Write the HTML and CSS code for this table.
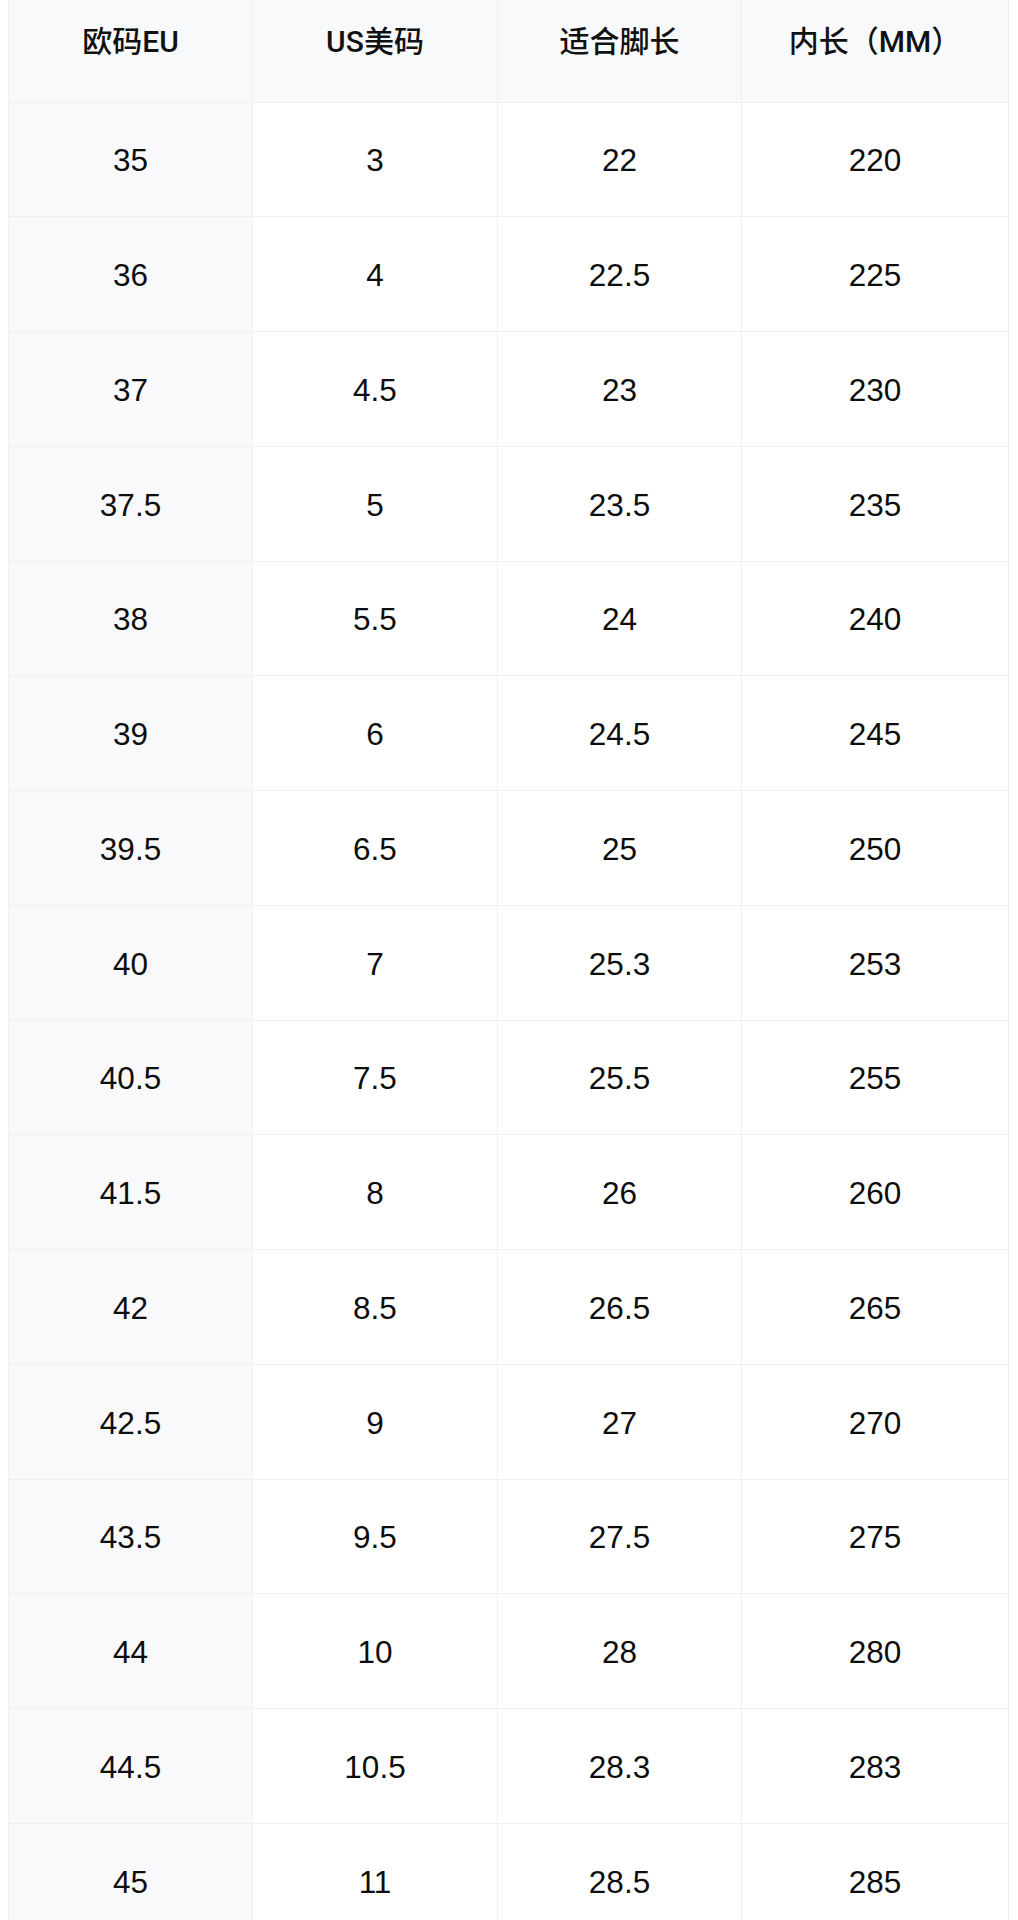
FILE: index.html
```html
<!DOCTYPE html>
<html lang="zh-CN">
<head>
<meta charset="utf-8">
<title>尺码对照表</title>
<link rel="stylesheet" href="styles.css">
</head>
<body>
<table class="size-table">
  <colgroup>
    <col class="c1"><col class="c2"><col class="c3"><col class="c4">
  </colgroup>
  <thead>
    <tr><th>欧码EU</th><th>US美码</th><th>适合脚长</th><th>内长（MM）</th></tr>
  </thead>
  <tbody>
    <tr><td>35</td><td>3</td><td>22</td><td>220</td></tr>
    <tr><td>36</td><td>4</td><td>22.5</td><td>225</td></tr>
    <tr><td>37</td><td>4.5</td><td>23</td><td>230</td></tr>
    <tr><td>37.5</td><td>5</td><td>23.5</td><td>235</td></tr>
    <tr><td>38</td><td>5.5</td><td>24</td><td>240</td></tr>
    <tr><td>39</td><td>6</td><td>24.5</td><td>245</td></tr>
    <tr><td>39.5</td><td>6.5</td><td>25</td><td>250</td></tr>
    <tr><td>40</td><td>7</td><td>25.3</td><td>253</td></tr>
    <tr><td>40.5</td><td>7.5</td><td>25.5</td><td>255</td></tr>
    <tr><td>41.5</td><td>8</td><td>26</td><td>260</td></tr>
    <tr><td>42</td><td>8.5</td><td>26.5</td><td>265</td></tr>
    <tr><td>42.5</td><td>9</td><td>27</td><td>270</td></tr>
    <tr><td>43.5</td><td>9.5</td><td>27.5</td><td>275</td></tr>
    <tr><td>44</td><td>10</td><td>28</td><td>280</td></tr>
    <tr><td>44.5</td><td>10.5</td><td>28.3</td><td>283</td></tr>
    <tr><td>45</td><td>11</td><td>28.5</td><td>285</td></tr>
  </tbody>
</table>
</body>
</html>
```
FILE: styles.css
```css
html, body {
  margin: 0;
  padding: 0;
  background: #ffffff;
}
body {
  padding: 0 10px 0 8px;
  overflow: hidden;
  height: 1920px;
  font-family: "Liberation Sans", "Noto Sans CJK SC", sans-serif;
  color: #111111;
}
.size-table {
  width: 1000px;
  border-collapse: collapse;
  table-layout: fixed;
}
.c1 { width: 244px; }
.c2 { width: 245px; }
.c3 { width: 244px; }
.c4 { width: 267px; }
.size-table th,
.size-table td {
  border: 1px solid #eef0f4;
  text-align: center;
  padding: 0;
}
.size-table thead tr {
  height: 102px;
}
.size-table th {
  background: #f8f9fb;
  border-top: none;
  font-family: "Roboto", "Noto Sans CJK SC", sans-serif;
  font-weight: 500;
  font-size: 30px;
  line-height: 40px;
  vertical-align: top;
  padding-top: 22px;
  color: #111111;
}
.size-table tbody tr {
  height: 114.75px;
}
.size-table td {
  font-size: 31.5px;
  line-height: 36px;
  vertical-align: middle;
  background: #ffffff;
  padding-top: 2px;
  color: #0d0d0d;
}
.size-table td:first-child {
  background: #f9f9fb;
}
```
